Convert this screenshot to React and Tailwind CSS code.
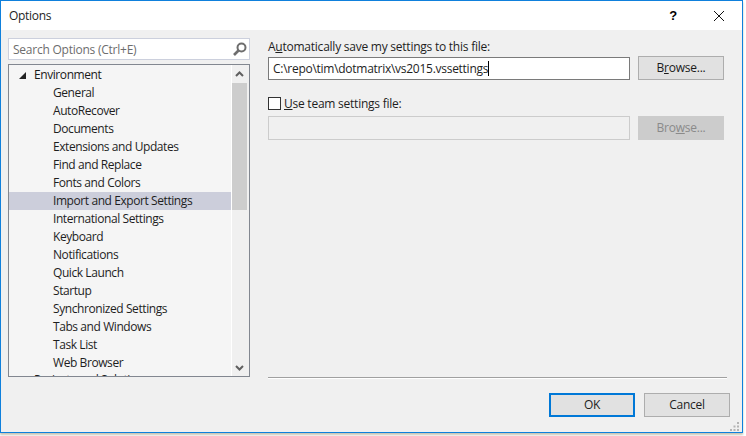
const items = [
  'General', 'AutoRecover', 'Documents', 'Extensions and Updates', 'Find and Replace',
  'Fonts and Colors', 'Import and Export Settings', 'International Settings', 'Keyboard',
  'Notifications', 'Quick Launch', 'Startup', 'Synchronized Settings', 'Tabs and Windows',
  'Task List', 'Web Browser',
]

function Browse({ disabled }) {
  return (
    <button className={`w-[86px] h-[24px] border text-[12px] ${disabled ? 'bg-[#cccccc] border-[#cccccc] text-[#8a8a8a]' : 'bg-[#e1e1e1] border-[#adadad] text-[#1a1a1a]'}`}>
      {disabled ? <>Bro<u>w</u>se...</> : <>B<u>r</u>owse...</>}
    </button>
  )
}

export default function App() {
  return (
    <div className="w-[746px] h-[436px] bg-white overflow-hidden text-[12px] text-[#1e1e1e] tracking-[-0.24px]" style={{ fontFamily: '"Open Sans", sans-serif' }}>
      <div className="w-[743px] h-[433px] border border-[#0f80dc] flex flex-col shadow-[0_2px_2px_#c9c5b5]">
        <div className="h-[29px] bg-white flex items-center shrink-0">
          <span className="ml-[8px] flex-1 tracking-[-0.3px]">Options</span>
          <span className="font-bold text-[13px] mr-[36px] text-black" style={{ fontFamily: '"Liberation Sans", sans-serif' }}>?</span>
          <svg width="12" height="12" viewBox="0 0 12 12" className="mr-[17px]">
            <path d="M1 1 L11 11 M11 1 L1 11" stroke="#111" strokeWidth="1" fill="none" />
          </svg>
        </div>

        <div className="flex-1 bg-[#f0f0f0] flex flex-col min-h-0">
          <div className="flex flex-1 min-h-0">
            <div className="w-[242px] ml-[7px] mt-[8px] shrink-0 flex flex-col">
              <div className="h-[22px] bg-white border border-[#ccd0dd] flex items-center justify-between pl-[4px] pr-[2px]">
                <span className="text-[#6d6d6d] pt-[2px]">Search Options (Ctrl+E)</span>
                <svg width="15" height="15" viewBox="0 0 15 15" fill="none">
                  <circle cx="9.5" cy="5.5" r="4" stroke="#6e6e6e" strokeWidth="2" />
                  <path d="M6.5 8.5 L2 13" stroke="#6e6e6e" strokeWidth="2.6" />
                </svg>
              </div>
              <div className="mt-[4px] h-[315px] border border-[#828790] bg-[#f5f5f5] flex overflow-hidden">
                <div className="w-[222px] shrink-0 overflow-hidden tracking-[-0.42px]">
                  <div className="h-[18px] flex items-center mt-[1px]">
                    <svg width="7" height="7" viewBox="0 0 7 7" className="ml-[10px] mr-[8px]">
                      <path d="M7 0 V7 H0 Z" fill="#222" />
                    </svg>
                    <span className="text-[#1a1a1a]">Environment</span>
                  </div>
                  {items.map(t => (
                    <div key={t} className={`h-[18px] flex items-center pl-[44px] ${t === 'Import and Export Settings' ? 'bg-[#cccedb]' : ''}`}>{t}</div>
                  ))}
                  <div className="h-[18px] flex items-center pl-[25px] -mt-[1px]">Projects and Solutions</div>
                </div>
                <div className="w-[1px] shrink-0 bg-white" />
                <div className="w-[17px] shrink-0 bg-[#f0f0f0] flex flex-col">
                  <div className="h-[18px] flex items-center justify-center pr-[2px]">
                    <svg width="9" height="6" viewBox="0 0 9 6"><path d="M1 5 L4.5 1.5 L8 5" stroke="#606060" strokeWidth="2" fill="none" /></svg>
                  </div>
                  <div className="w-[15px] h-[127px] bg-[#cdcdcd]" />
                  <div className="flex-1" />
                  <div className="h-[16px] flex items-center justify-center pr-[2px]">
                    <svg width="9" height="6" viewBox="0 0 9 6"><path d="M1 1 L4.5 4.5 L8 1" stroke="#606060" strokeWidth="2" fill="none" /></svg>
                  </div>
                </div>
              </div>
            </div>

            <div className="flex-1 ml-[18px] mr-[15px] flex flex-col min-w-0">
              <div className="mt-[8px] h-[18px] flex items-center">
                <span>A<u>u</u>tomatically save my settings to this file:</span>
              </div>
              <div className="flex gap-[8px] items-end">
                <div className="w-[362px] h-[23px] bg-white border border-[#7a7a7a] flex items-center pl-[4px]">
                  <span className="tracking-[-0.27px]">C:\repo\tim\dotmatrix\vs2015.vssettings</span>
                  <span className="w-[1px] h-[15px] bg-black" />
                </div>
                <Browse />
              </div>
              <div className="flex items-center mt-[16px] h-[15px]">
                <div className="w-[13px] h-[13px] bg-white border border-[#333333]" />
                <span className="ml-[3px]"><u>U</u>se team settings file:</span>
              </div>
              <div className="flex gap-[8px] mt-[5px]">
                <div className="w-[362px] h-[24px] bg-[#f0f0f0] border border-[#cccccc]" />
                <Browse disabled />
              </div>
            </div>
          </div>

          <div className="ml-[267px] mr-[15px] h-[2px] border-t border-[#a0a0a0] border-b-white border-b" />
          <div className="h-[53px] relative flex justify-end gap-[9px] pt-[14px] pr-[12px] shrink-0">
            <button className="w-[86px] h-[24px] bg-[#e1e1e1] border-2 border-[#0078d7]">OK</button>
            <button className="w-[86px] h-[24px] bg-[#e1e1e1] border border-[#adadad]">Cancel</button>
            <svg width="10" height="10" viewBox="0 0 10 10" className="absolute right-[2px] bottom-[0px]" fill="#b4b4b4">
              <rect x="7" y="0" width="2" height="2" />
              <rect x="3.5" y="3.5" width="2" height="2" />
              <rect x="7" y="3.5" width="2" height="2" />
              <rect x="0" y="7" width="2" height="2" />
              <rect x="3.5" y="7" width="2" height="2" />
              <rect x="7" y="7" width="2" height="2" />
            </svg>
          </div>
        </div>
      </div>
    </div>
  )
}
